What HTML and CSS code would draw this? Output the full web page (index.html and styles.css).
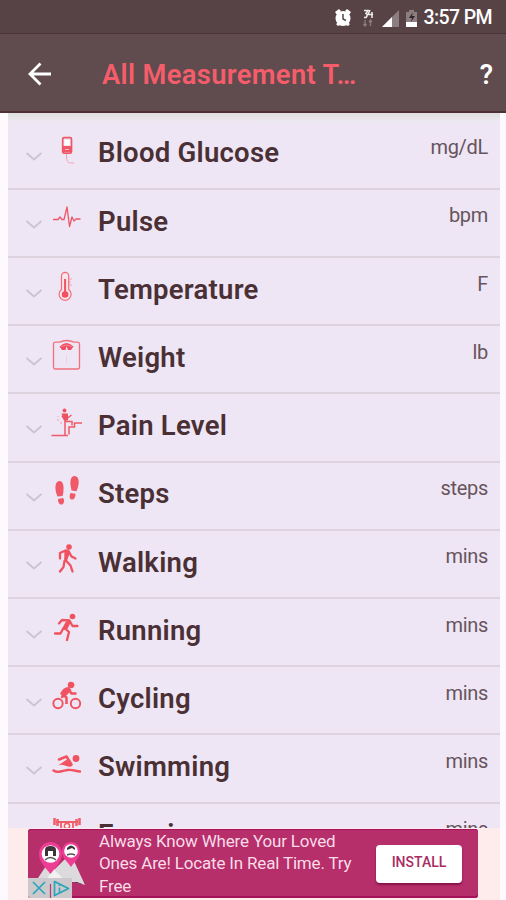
FILE: index.html
```html
<!DOCTYPE html>
<html lang="en">
<head>
<meta charset="utf-8">
<title>All Measurement Types</title>
<link rel="stylesheet" href="styles.css">
</head>
<body>
<svg width="0" height="0" class="defs"><defs>
<symbol id="chevron" viewBox="0 0 18 10"><path d="M1.500 1 9 7.500 16.500 1" fill="none" stroke="#ccc4d3" stroke-width="1.900"/></symbol>
</defs></svg>
<div class="screen">
<header class="status">
<svg class="status-icons" viewBox="0 0 86 22">
<g fill="#fff"><circle cx="9" cy="11.500" r="7.500"/><path d="M1 5 5 2l2 2-4 4zM17 5l-4-3-2 2 4 4zM2 17l3-2 1 3-2 1zM16 17l-3-2-1 3 2 1z"/></g>
<path d="M9 7v5l3 1.500" fill="none" stroke="#57464a" stroke-width="1.500"/>
<path d="M30 3.500h4l-2 3q2.500 1 0 4h-2M36 3l-2 4.500h5M38 5v6" fill="none" stroke="#eee" stroke-width="1.500"/>
<path d="M31 13v6M29.500 17l1.500 2 1.500-2M36.500 19v-6M35 15l1.500-2 1.500 2" fill="none" stroke="#8d7d81" stroke-width="1.300"/>
<path d="M48 20 65 3v17z" fill="#8d7d81"/><path d="M48 20 58 10v10z" fill="#fff"/>
<path d="M75 3h5v2h3v15H72V5h3z" fill="#8d7d81"/><path d="M72 15h11v5H72z" fill="#fff"/><path d="m79 5-4 6h3l-1 4 4-6h-3z" fill="#30262a"/>
</svg>
<span class="clock">3:57 PM</span>
</header>
<nav class="appbar">
<svg class="back" viewBox="0 0 24 24"><path d="M23 12H2M12.500 1.500 2 12l10.500 10.500" fill="none" stroke="#fff" stroke-width="2.800"/></svg>
<h1>All Measurement T…</h1>
<span class="help">?</span>
</nav>
<main class="list">
<div class="row"><svg class="chev"><use href="#chevron"/></svg><svg class="icon" viewBox="0 0 30 32"><rect x="10.700" y="3.700" width="8.800" height="15.500" rx="1.500" fill="none" stroke="#f05766" stroke-width="1.700"/><path d="M11 12h8v6h-8z" fill="#f05766"/><path d="M13 15.500h4" stroke="#fff" stroke-width=".6"/><path d="M12.500 6h5v5h-5z" fill="#fff"/><path d="M14.500 20v3q0 6 4 6h3.500" fill="none" stroke="#efa5b5"/></svg><span class="name">Blood Glucose</span><span class="unit">mg/dL</span></div>
<div class="row"><svg class="chev"><use href="#chevron"/></svg><svg class="icon" viewBox="0 0 30 32"><path d="M1 17.500h5l2-2.500 2 2.500h2L15 5l2.500 19.500L20 15l2 4 2-2h4.500" fill="none" stroke="#ee5565" stroke-width="1.300" stroke-linejoin="round"/></svg><span class="name">Pulse</span><span class="unit">bpm</span></div>
<div class="row"><svg class="chev"><use href="#chevron"/></svg><svg class="icon" viewBox="0 0 30 32"><path d="M9.500 18.500V5a3.600 3.600 0 0 1 7.200 0v13.500a6 6 0 1 1-7.200 0z" fill="#fbe5ec" stroke="#f16b79" stroke-width="1.200"/><path d="M13.100 8v15" stroke="#f05060" stroke-width="2"/><circle cx="13.100" cy="23.500" r="3.300" fill="#f05060"/><path d="M17 8h3M17 11h2M17 14h3" stroke="#e6a3b1" stroke-width=".9"/></svg><span class="name">Temperature</span><span class="unit">F</span></div>
<div class="row"><svg class="chev"><use href="#chevron"/></svg><svg class="icon" viewBox="0 0 30 32"><path d="M3.500 3.200h4Q14.500-.2 22 3.200h3.500q2 0 2 2V28q0 2-2 2h-22q-2 0-2-2V5.200q0-2 2-2z" fill="none" stroke="#f1727e" stroke-width="1.300"/><path d="M7.500 7.500q7-7 14 0L19 11h-3l-1.500-4-1 4H10z" fill="#f04e60"/><path d="M9 7.500q5.500-3 11 0" fill="none" stroke="#f6c6cf" stroke-width=".5"/><path d="M14.500 16v9" stroke="#dfd2e0" stroke-width=".8"/></svg><span class="name">Weight</span><span class="unit">lb</span></div>
<div class="row"><svg class="chev"><use href="#chevron"/></svg><svg class="icon" viewBox="0 0 30 32"><g fill="none" stroke="#ef5a68" stroke-width="1.500"><path d="M-.5 28.500h16.500M13 13v15M17 27.500V20h5.500v-4h7.500M10 9l3 4 6.500-5M13 14.500h7v4"/></g><circle cx="12.500" cy="3.500" r="1.900" fill="#ef5060"/><path d="M9.500 6.500h6.500v7h-4z" fill="#ef5060"/><path d="M6 9v1M6 12v2M8 16h2" stroke="#ee9dac"/></svg><span class="name">Pain Level</span><span class="unit"></span></div>
<div class="row"><svg class="chev"><use href="#chevron"/></svg><svg class="icon" viewBox="0 0 30 32"><g fill="#f05a68"><path d="M7 6c4-.5 5 5 4.500 9 0 3-.7 5-1 6L5.500 21.500C3 16 2 7 7 6zM6 24l5-1c2 2 1 6-1 6.500C7 30 6 27 6 24zM23 1c-4-.5-5 5-4.500 9l1 5.500 5 .7C27 11 28.500 2 23 1zM18.500 18l5 .8c0 3-1 6-3.500 5.800-2.500-.2-3-3.500-1.500-6.600z"/></g></svg><span class="name">Steps</span><span class="unit">steps</span></div>
<div class="row"><svg class="chev"><use href="#chevron"/></svg><svg class="icon" viewBox="0 0 30 32"><circle cx="17" cy="4" r="2.800" fill="#f0525f"/><g fill="none" stroke="#f0525f" stroke-width="2.300" stroke-linecap="round" stroke-linejoin="round"><path d="M8 15.500V10l5.500-2.500 3 .5 3 5.500 4 2M15 8.500 13.500 17l5 5.500 2 6M12.500 18l-1 6-3.500 4.500"/><path d="M13.500 9v9M16.500 10 14 17"/></g></svg><span class="name">Walking</span><span class="unit">mins</span></div>
<div class="row"><svg class="chev"><use href="#chevron"/></svg><svg class="icon" viewBox="0 0 30 32"><circle cx="20.500" cy="4.500" r="2.800" fill="#f0525f"/><g fill="none" stroke="#f0525f" stroke-width="2.300" stroke-linecap="round" stroke-linejoin="round"><path d="M7 11.500 10 8l7.500.5 3 5.500h5M15.500 9 12 15.500l5 4.500-2 8M11.500 16l-3 5.500H3"/><path d="m17 10-3 6" stroke-width="3.400"/></g></svg><span class="name">Running</span><span class="unit">mins</span></div>
<div class="row"><svg class="chev"><use href="#chevron"/></svg><svg class="icon" viewBox="0 0 30 32"><g fill="none" stroke="#f0525f"><circle cx="6" cy="23.500" r="4.700" stroke-width="1.900"/><circle cx="23.500" cy="23.500" r="4.700" stroke-width="1.900"/><path d="m16 9-5 6 3.500 2.500V24M16.500 9.500l3 4h5M11 14l-1 4" stroke-width="2.500" stroke-linejoin="round"/></g><path d="M8 14q3-7 8.500-7l3 3-6 6.500z" fill="#f0525f"/><circle cx="19" cy="5" r="3.200" fill="#f0525f"/><path d="M15.500 4.800q4-5 7.500.7z" fill="#f0525f"/></svg><span class="name">Cycling</span><span class="unit">mins</span></div>
<div class="row"><svg class="chev"><use href="#chevron"/></svg><svg class="icon" viewBox="0 0 30 32"><circle cx="24" cy="10.500" r="3.400" fill="#f0525f"/><path d="m7 11.500 7.500-3 5 8" fill="none" stroke="#f0525f" stroke-width="2.500" stroke-linejoin="round" stroke-linecap="round"/><path d="m6 17.500 9-6 5.500 6.500q-4 1.500-7.500-.5-4-1.500-7 0z" fill="#f0525f"/><path d="M1.500 22.500q3 2 7 1t7-1.500 7 .5 5.500 1" fill="none" stroke="#f0525f" stroke-width="2.400" stroke-linecap="round"/></svg><span class="name">Swimming</span><span class="unit">mins</span></div>
<div class="row"><svg class="chev"><use href="#chevron"/></svg><svg class="icon" viewBox="0 0 30 32"><path d="M2.500 2v7M5.500 3v7M24.500 3v7M27.500 2v7" stroke="#f05c67" stroke-width="2.500"/><path d="M4 6h22M9 6v8h12V6" fill="none" stroke="#f05c67" stroke-width="1.800"/><circle cx="15" cy="10" r="2.600" fill="#fff" stroke="#f05c67" stroke-width="1.500"/></svg><span class="name">Exercise</span><span class="unit">mins</span></div>
</main>
<footer class="ad">
<div class="banner">
<div class="art">
<svg viewBox="0 0 62 69">
<path d="M8 52 20 34l7 6 12-12 7 4 11 24-12-3H8z" fill="#dcdadd"/><path d="m25 40-8 13h22z" fill="#f2f1f2"/><path d="m44 53 13 3-8-3z" fill="#6b2347"/>
<path d="M11 25c0-7 5-12 11.500-12S34 18 34 25c0 8-7 14-11.500 20C18 39 11 33 11 25z" fill="#ed3d94"/><path d="M34 23c0-6 4-10 9-10s9 4 9 10c0 6-6 10-9 15-3-5-9-9-9-15z" fill="#ed3d94"/>
<circle cx="22.500" cy="25" r="8.800" fill="#fff"/><circle cx="43" cy="22" r="6.800" fill="#fff"/>
<path d="M17 27v-6q0-4 5.500-4t5.500 4v6h-3v-5h-5v5zM39 21v-2q4-5 8 0v2l-3-2z" fill="#3c3338"/><path d="M17 31q5.500-5 11 0M39 26q4-2 8 0" fill="none" stroke="#555" stroke-width="1.500"/>
</svg>
<div class="badge"><svg viewBox="0 0 44 20"><path d="M0 0h44v20H0z" fill="#ccc8cc"/><path d="m5 4 12 12M17 4 5 16" stroke="#27a5bd" stroke-width="1.600"/><path d="M22.500 6v14" stroke="#b7376e" stroke-width="1.200"/><path d="m26.500 3.500 14 7-14 7z" fill="none" stroke="#27a5bd" stroke-width="1.700" stroke-linejoin="round"/><path d="M31.500 9.500v5M31.500 6.500V8" stroke="#27a5bd" stroke-width="1.600"/></svg></div>
</div>
<p>Always Know Where Your Loved<br>Ones Are! Locate In Real Time. Try<br>Free</p>
<button class="install">INSTALL</button>
</div>
</footer>
</div>
</body>
</html>
```
FILE: styles.css
```css
* { box-sizing: border-box; }
body { margin: 0; font-family: Roboto, sans-serif; background: #fdf9fd; }
.defs { position: absolute; }
.screen { height: 900px; display: flex; flex-direction: column; overflow: hidden; }
.status { height: 34px; flex: none; display: flex; align-items: center; justify-content: flex-end; padding: 2px 14px 0 0; background: #574246; border-bottom: 1px solid #4b3439; color: #fff; }
.status-icons { width: 86px; height: 22px; margin-right: 3px; }
.clock { font-size: 19.500px; font-weight: 500; line-height: 24px; white-space: nowrap; letter-spacing: -.6px; }
.appbar { height: 79px; flex: none; display: flex; align-items: center; padding: 3px 13px 0 28px; background: #604b4e; border-bottom: 2px solid #4c3036; color: #fff; }
.back { width: 24px; height: 24px; }
h1 { margin: 2px 0 0 50px; font-size: 27.300px; font-weight: 600; line-height: 32px; letter-spacing: .35px; color: #f65d6b; white-space: nowrap; }
.help { margin: 2px 0 0 auto; font-size: 27px; font-weight: 600; line-height: 32px; }
.list { flex: 1; min-height: 0; overflow: hidden; margin: 0 6px 0 8px; padding-top: 8.700px; background: linear-gradient(#dedede, #ebe7ef 7px, #eee6f4 12px); }
.row { height: 68.200px; display: flex; align-items: flex-start; padding: 0 12px 0 17px; border-bottom: 2px solid #dcd3df; }
.chev { width: 18px; height: 10px; margin-top: 30.500px; flex: none; }
.icon { width: 30px; height: 32px; margin: 12.500px 0 0 9px; flex: none; overflow: visible; }
.name { margin: 15.700px 0 0 16px; font-size: 27.500px; line-height: 32px; font-weight: 600; letter-spacing: .25px; color: #4a3034; white-space: nowrap; }
.unit { margin: 13.500px 0 0 auto; font-size: 20px; line-height: 24px; letter-spacing: -.3px; color: #67545d; }
.ad { height: 72px; flex: none; margin: 0 6px 0 8px; padding: 1px 22px 2px 20px; background: #feecec; }
.banner { height: 69px; display: flex; align-items: flex-start; background: #b62e6a; border-radius: 3px; box-shadow: inset 0 -2px 0 #a7115a, inset 0 1px 0 #a7115a; overflow: hidden; }
.art { position: relative; width: 62px; height: 69px; flex: none; }
.art svg { display: block; width: 100%; height: 100%; }
.badge { position: absolute; left: 0; bottom: 0; width: 44px; height: 20px; }
p { margin: 1px 0 0 9px; width: 277px; flex: none; font-size: 17px; line-height: 22.300px; letter-spacing: -.17px; color: #f9dce8; white-space: nowrap; }
.install { width: 86px; height: 38px; margin-top: 16px; padding: 0 0 4px; border: 0; border-radius: 4px; background: #fff; box-shadow: 0 2px 2px #84134a; font: 500 14px Roboto, sans-serif; color: #a82c62; }
```
